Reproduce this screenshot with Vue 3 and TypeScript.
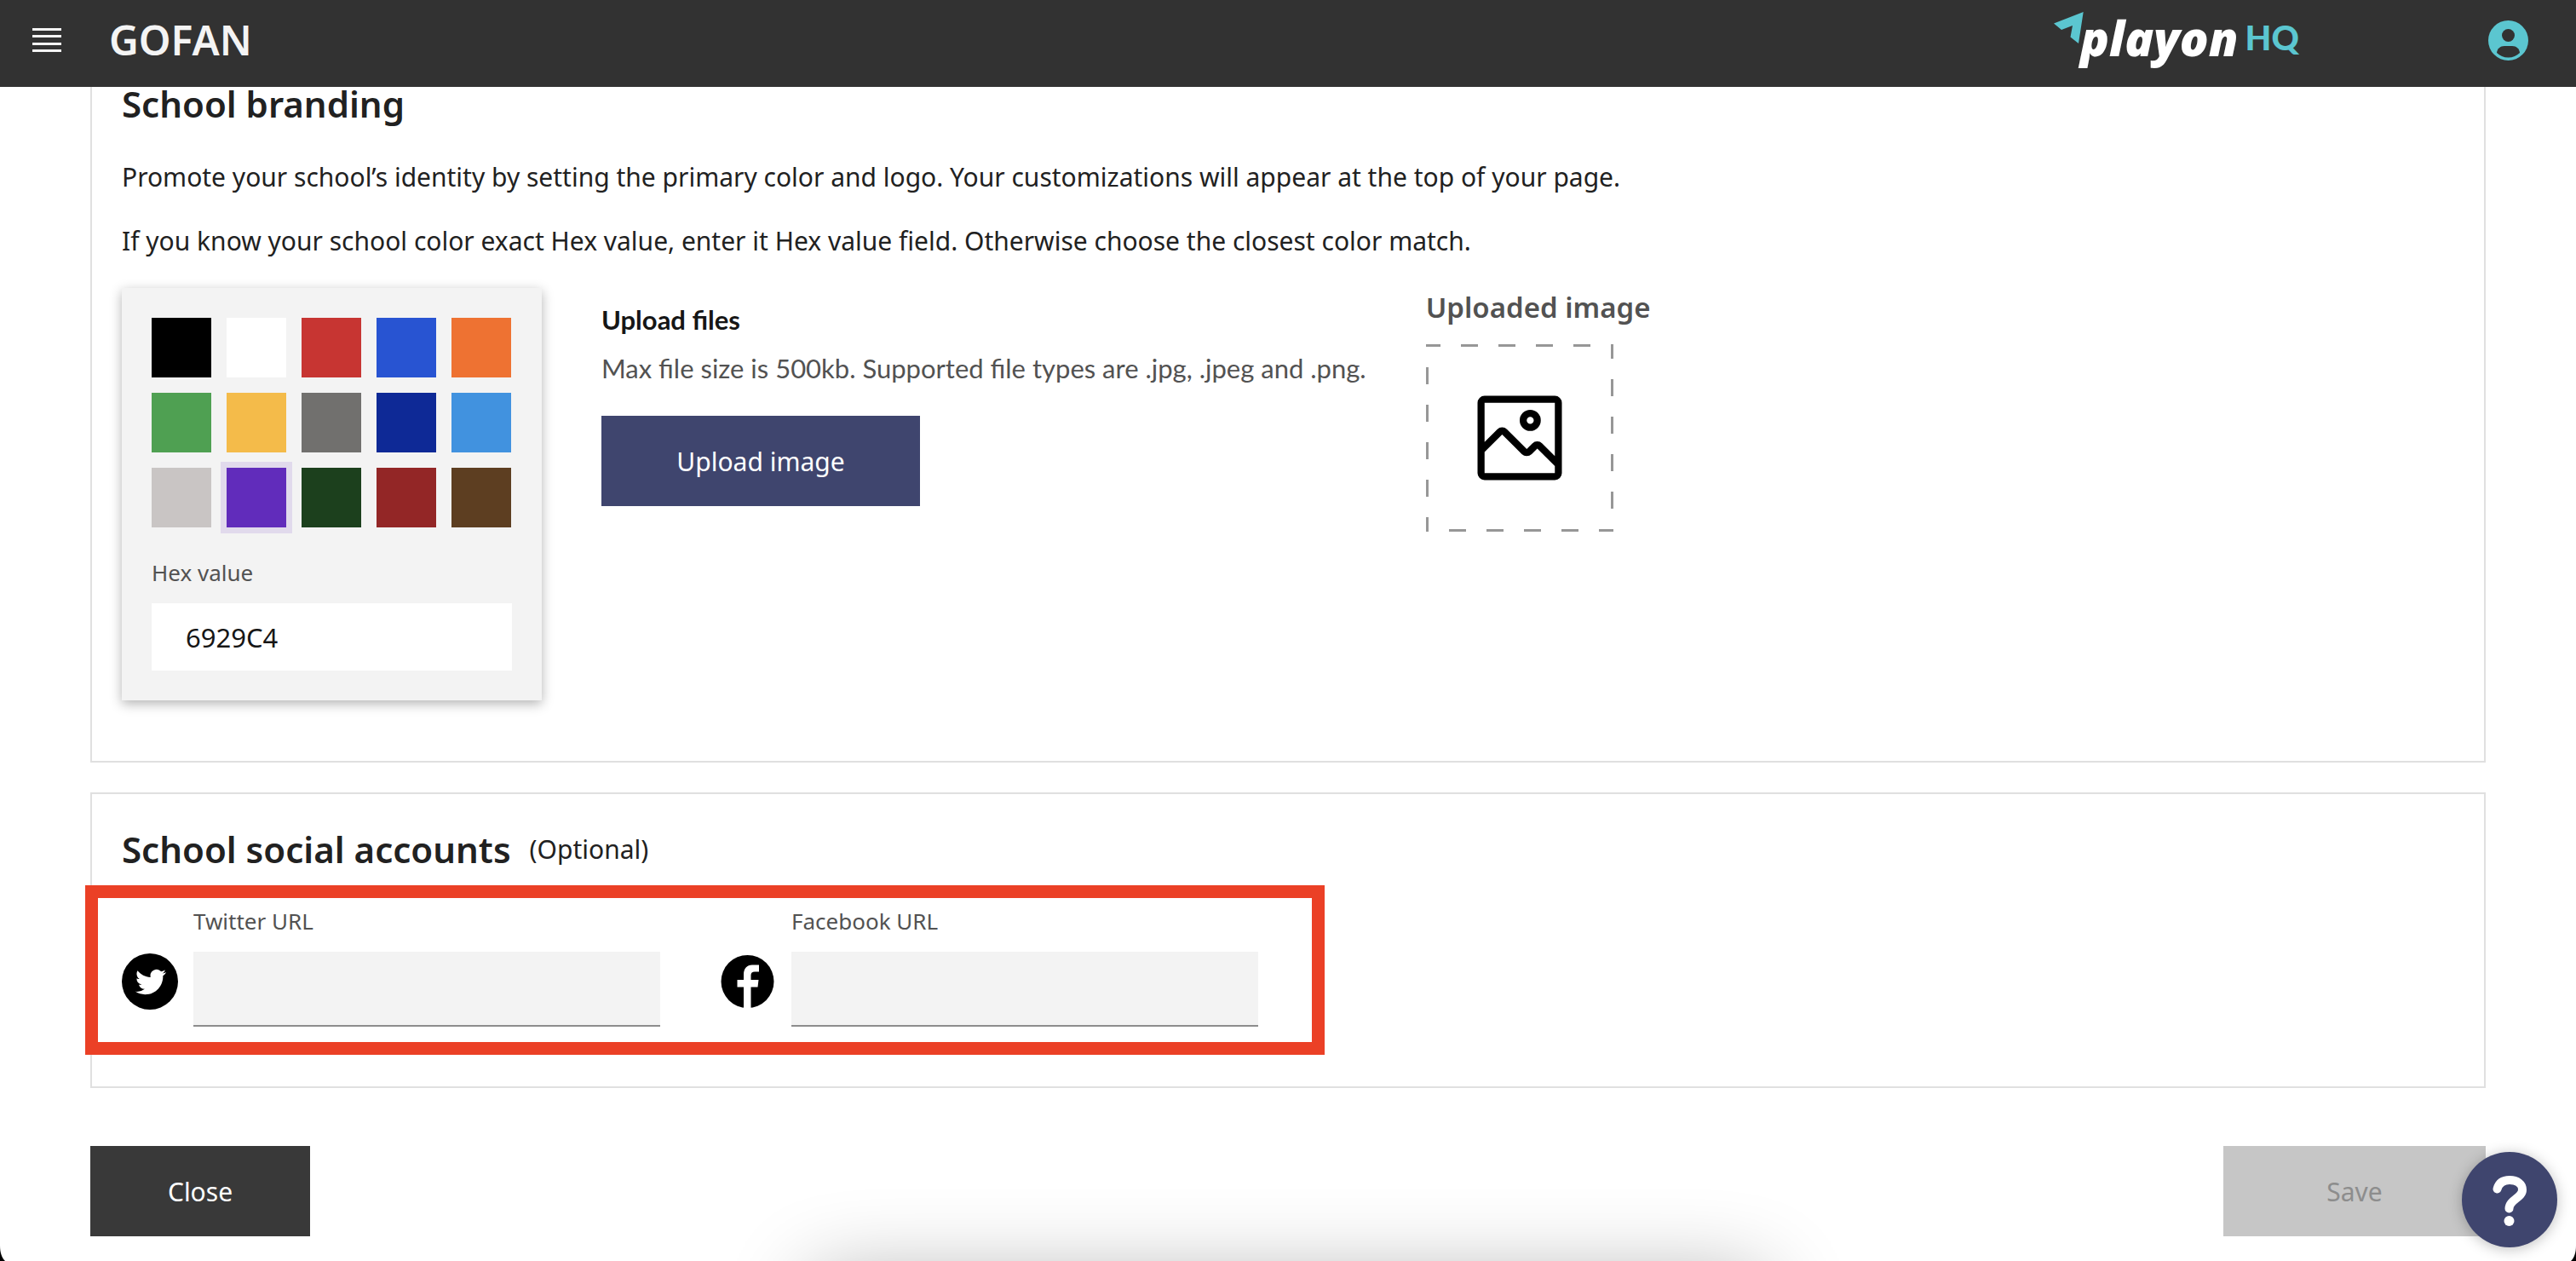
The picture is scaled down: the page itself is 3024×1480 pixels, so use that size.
<script setup lang="ts">
import { ref } from 'vue'

interface Swatch {
  name: string
  color: string
  hex: string
}

const swatches: Swatch[] = [
  { name: 'Black', color: '#000000', hex: '000000' },
  { name: 'White', color: '#ffffff', hex: 'FFFFFF' },
  { name: 'Red', color: '#c73532', hex: 'C73532' },
  { name: 'Blue', color: '#2854d2', hex: '2854D2' },
  { name: 'Orange', color: '#ee7232', hex: 'EE7232' },
  { name: 'Green', color: '#4fa052', hex: '4FA052' },
  { name: 'Yellow', color: '#f4bb4a', hex: 'F4BB4A' },
  { name: 'Gray', color: '#71706e', hex: '71706E' },
  { name: 'Navy', color: '#0e2996', hex: '0E2996' },
  { name: 'Sky', color: '#4192df', hex: '4192DF' },
  { name: 'Silver', color: '#c9c5c4', hex: 'C9C5C4' },
  { name: 'Purple', color: '#612cbb', hex: '6929C4' },
  { name: 'Forest', color: '#1c401d', hex: '1C401D' },
  { name: 'Maroon', color: '#932626', hex: '932626' },
  { name: 'Brown', color: '#5d3e21', hex: '5D3E21' },
]

const hexValue = ref('6929C4')
const twitterUrl = ref('')
const facebookUrl = ref('')
</script>

<template>
  <div class="page">
    <header class="topbar">
      <button class="icon-button" type="button" aria-label="Menu">
        <svg width="34" height="28" viewBox="0 0 34 28" fill="#f4f4f4">
          <rect width="34" height="3" />
          <rect y="8" width="34" height="3" />
          <rect y="17" width="34" height="3" />
          <rect y="25" width="34" height="3" />
        </svg>
      </button>
      <span class="brand">GOFAN</span>
      <a class="logo" href="#">
        <svg class="logo-mark" width="35" height="37" viewBox="0 0 35 37">
          <path d="M0 13.5 34.700 0 29 37 19.500 29.500 22 16 9 21z" fill="#5bc6d0" />
        </svg>
        <span class="logo-name">playon</span>
        <span class="logo-suffix">HQ</span>
      </a>
      <button class="icon-button" type="button" aria-label="Account">
        <svg width="47" height="47" viewBox="0 0 47 47">
          <circle cx="23.500" cy="23.500" r="23.500" fill="#5bc6d0" />
          <circle cx="23.500" cy="17.500" r="7.500" fill="#323232" />
          <path d="M10 38c.5-5 4-8 9-8h9c5 0 8.500 3 9 8-3.500 3.500-8 5.500-13.500 5.500S13.500 41.500 10 38z" fill="#323232" />
        </svg>
      </button>
    </header>

    <main class="content">
      <section class="panel panel-branding">
        <h2>School branding</h2>
        <p>Promote your school’s identity by setting the primary color and logo. Your customizations will appear at the top of your page.</p>
        <p>If you know your school color exact Hex value, enter it Hex value field. Otherwise choose the closest color match.</p>

        <div class="branding-row">
          <div class="picker">
            <div class="swatches">
              <button
                v-for="s in swatches"
                :key="s.hex"
                type="button"
                class="swatch"
                :class="{ selected: s.hex === hexValue }"
                :style="{ backgroundColor: s.color }"
                :aria-label="s.name"
                @click="hexValue = s.hex"
              ></button>
            </div>
            <label for="hex">Hex value</label>
            <input id="hex" v-model="hexValue" class="hex-input" type="text" />
          </div>

          <div class="upload">
            <h3>Upload files</h3>
            <p class="hint">Max file size is 500kb. Supported file types are .jpg, .jpeg and .png.</p>
            <button class="button button-primary" type="button">Upload image</button>
          </div>

          <div class="preview">
            <h4>Uploaded image</h4>
            <div class="preview-box">
              <svg class="dashes" width="220" height="220" viewBox="0 0 220 220">
                <path d="M0 0H220V220H0Z" fill="none" stroke="#979797" stroke-width="6" stroke-dasharray="20 24" stroke-dashoffset="3" />
              </svg>
              <svg width="132" height="132" viewBox="0 0 32 32">
                <path d="M19 14a3 3 0 1 0-3-3 3 3 0 0 0 3 3zm0-4a1 1 0 1 1-1 1 1 1 0 0 1 1-1z" />
                <path d="M26 4H6A2 2 0 0 0 4 6V26a2 2 0 0 0 2 2H26a2 2 0 0 0 2-2V6A2 2 0 0 0 26 4Zm0 22H6V20l5-5 5.590 5.590a2 2 0 0 0 2.820 0L21 19l5 5Zm0-4.830-3.590-3.590a2 2 0 0 0-2.820 0L18 19.170l-5.590-5.590a2 2 0 0 0-2.820 0L6 17.170V6H26Z" />
              </svg>
            </div>
          </div>
        </div>
      </section>

      <section class="panel panel-social">
        <div class="title-row">
          <h2>School social accounts</h2>
          <span class="optional">(Optional)</span>
        </div>
        <div class="social-row">
          <div class="social-item">
            <svg class="social-icon" width="66" height="66" viewBox="0 0 66 66">
              <circle cx="33" cy="33" r="33" />
              <path
                transform="translate(16 15.5) scale(1.5)"
                fill="#fff"
                d="M23.953 4.570a10 10 0 01-2.825.775 4.958 4.958 0 002.163-2.723c-.951.555-2.005.959-3.127 1.184a4.920 4.920 0 00-8.384 4.482C7.690 8.095 4.067 6.130 1.640 3.162a4.822 4.822 0 00-.666 2.475c0 1.710.870 3.213 2.188 4.096a4.904 4.904 0 01-2.228-.616v.060a4.923 4.923 0 003.946 4.827 4.996 4.996 0 01-2.212.085 4.936 4.936 0 004.604 3.417 9.867 9.867 0 01-6.102 2.105c-.390 0-.779-.023-1.170-.067a13.995 13.995 0 007.557 2.209c9.053 0 13.998-7.496 13.998-13.985 0-.210 0-.420-.015-.630A9.935 9.935 0 0024 4.590z"
              />
            </svg>
            <div class="field">
              <label for="twitter">Twitter URL</label>
              <input id="twitter" v-model="twitterUrl" class="url-input" type="text" />
            </div>
          </div>
          <div class="social-item">
            <svg class="social-icon" width="66" height="66" viewBox="0 0 66 66">
              <circle cx="32.500" cy="33" r="31" />
              <path d="M28 66V39.500H20.500V31H28V25c0-7.500 4-11.500 10-11.500h8V21.500h-5c-3 0-4.500 1.500-4.500 4V31h9l-1 8.500h-8V66z" fill="#fff" />
            </svg>
            <div class="field">
              <label for="facebook">Facebook URL</label>
              <input id="facebook" v-model="facebookUrl" class="url-input" type="text" />
            </div>
          </div>
          <div class="highlight"></div>
        </div>
      </section>

      <div class="actions">
        <button class="button button-close" type="button">Close</button>
        <button class="button button-save" type="button" disabled>Save</button>
      </div>
    </main>

    <div class="edge">
      <div class="edge-shadow"></div>
      <svg class="corner corner-left" width="6" height="18" viewBox="0 0 6 18"><path d="M0 0C0 8 2 14 6 18H0z" /></svg>
      <svg class="corner corner-right" width="6" height="18" viewBox="0 0 6 18"><path d="M6 0C6 8 4 14 0 18H6z" /></svg>
    </div>

    <button class="help" type="button" aria-label="Help">
      <svg width="112" height="112" viewBox="0 0 112 112">
        <path d="M41.500 43.500C43.500 36 49 33 56 33c9 0 15 4.500 15 11.500C71 54 55.500 56 55.500 66.500" fill="none" stroke="#fff" stroke-width="10" stroke-linecap="round" />
        <circle cx="55.500" cy="81" r="6" fill="#fff" />
      </svg>
    </button>
  </div>
</template>

<style>
body {
  margin: 0;
  background: #fff;
}
</style>

<style scoped>
.page {
  min-height: 100vh;
  box-sizing: border-box;
  font-family: 'Noto Sans', sans-serif;
  font-size: 30px;
  color: #212121;
}

h2,
h3,
h4,
p {
  margin: 0;
}

button,
input {
  font-family: inherit;
  font-size: inherit;
  border: 0;
  border-radius: 0;
  padding: 0;
  box-sizing: border-box;
}

svg {
  display: block;
}

.topbar {
  display: flex;
  align-items: center;
  height: 102px;
  box-sizing: border-box;
  padding: 0 56px 8px 38px;
  background: #323232;
}

.icon-button {
  background: none;
}

.brand {
  margin-left: 56px;
  font-size: 48px;
  line-height: 56px;
  font-weight: 600;
  color: #f4f4f4;
}

.logo {
  display: flex;
  align-items: center;
  margin-left: auto;
  margin-right: 222px;
  padding-bottom: 6px;
  text-decoration: none;
}

.logo-mark {
  align-self: flex-start;
  margin-top: 2px;
  margin-right: -4px;
}

.logo-name {
  font-family: 'Open Sans', sans-serif;
  font-size: 56px;
  line-height: 64px;
  font-weight: 800;
  font-style: italic;
  color: #fff;
}

.logo-suffix {
  margin-left: 8px;
  font-family: Lato, sans-serif;
  font-size: 40px;
  font-weight: 900;
  color: #5bc6d0;
}

.content {
  padding: 0 106px;
}

.panel {
  border: 2px solid #e0e0e0;
  padding: 0 35px;
}

.panel-branding {
  border-top: 0;
  padding-bottom: 71px;
}

.panel-social {
  margin-top: 35px;
  padding-top: 45px;
  padding-bottom: 70px;
}

h2 {
  font-size: 42px;
  line-height: 40px;
  font-weight: 600;
}

.panel p {
  line-height: 46px;
}

h2 + p {
  margin-top: 43px;
}

p + p {
  margin-top: 29px;
}

.branding-row {
  display: flex;
  align-items: flex-start;
  gap: 70px;
  margin-top: 32px;
}

.picker {
  display: flex;
  flex-direction: column;
  flex: none;
  width: 493px;
  box-sizing: border-box;
  padding: 35px;
  background: #f3f3f3;
  box-shadow: 0 4px 13px rgba(0, 0, 0, 0.3);
}

.swatches {
  display: grid;
  grid-template-columns: repeat(5, 70px);
  grid-auto-rows: 70px;
  gap: 18px;
  margin-bottom: 36px;
}

.swatch.selected {
  box-shadow: 0 0 0 7px #e1daec;
}

label {
  font-size: 26px;
  line-height: 34px;
  color: #525252;
}

.hex-input {
  width: 100%;
  height: 79px;
  margin-top: 19px;
  padding: 0 40px;
  font-size: 31px;
  background: #fff;
  color: #161616;
}

.upload {
  padding-top: 17px;
  font-family: Lato, sans-serif;
  font-size: 31px;
}

h3 {
  font-size: 31px;
  line-height: 40px;
  font-weight: 700;
  color: #161616;
}

.panel .hint {
  margin: 17px 0 36px;
  line-height: 40px;
  color: #525252;
}

.button {
  height: 106px;
  font-family: 'Noto Sans', sans-serif;
  font-size: 30px;
  color: #fff;
}

.button-primary {
  width: 374px;
  background: #3f456e;
}

.preview {
  padding-top: 1px;
}

h4 {
  font-size: 33px;
  line-height: 44px;
  font-weight: 600;
  color: #525252;
}

.preview-box {
  position: relative;
  display: flex;
  align-items: center;
  justify-content: center;
  width: 220px;
  height: 220px;
  margin-top: 21px;
}

.dashes {
  position: absolute;
  inset: 0;
}

.title-row {
  display: flex;
  align-items: center;
  gap: 22px;
  line-height: 40px;
}

.social-row {
  position: relative;
  display: flex;
  gap: 70px;
  width: fit-content;
  margin-top: 47px;
}

.social-item {
  display: flex;
  align-items: flex-end;
  gap: 18px;
}

.social-icon {
  margin-bottom: 20px;
}

.field {
  display: flex;
  flex-direction: column;
  gap: 19px;
}

.url-input {
  width: 548px;
  height: 88px;
  padding: 0 35px;
  background: #f3f3f3;
  border-bottom: 2px solid #8d8d8d;
}

.highlight {
  position: absolute;
  inset: -25px -78px -33px -43px;
  border: 15px solid #eb4026;
  pointer-events: none;
}

.actions {
  display: flex;
  justify-content: space-between;
  margin-top: 68px;
}

.button-close {
  width: 258px;
  background: #393939;
}

.button-save {
  width: 308px;
  background: #c6c6c6;
  color: #8d8d8d;
}

.edge {
  position: fixed;
  inset: auto 0 0;
  height: 120px;
  overflow: hidden;
  pointer-events: none;
}

.edge-shadow {
  position: absolute;
  top: 140px;
  left: 50%;
  width: 1116px;
  height: 300px;
  margin-left: -558px;
  box-shadow: 0 0 100px rgba(0, 0, 0, 0.32);
}

.corner {
  position: absolute;
  bottom: 0;
}

.corner-left {
  left: 0;
}

.corner-right {
  right: 0;
}

.help {
  position: fixed;
  right: 22px;
  bottom: 16px;
  width: 112px;
  height: 112px;
  border-radius: 50%;
  background: #3f456e;
  box-shadow: 0 2px 16px rgba(0, 0, 0, 0.25);
}
</style>
